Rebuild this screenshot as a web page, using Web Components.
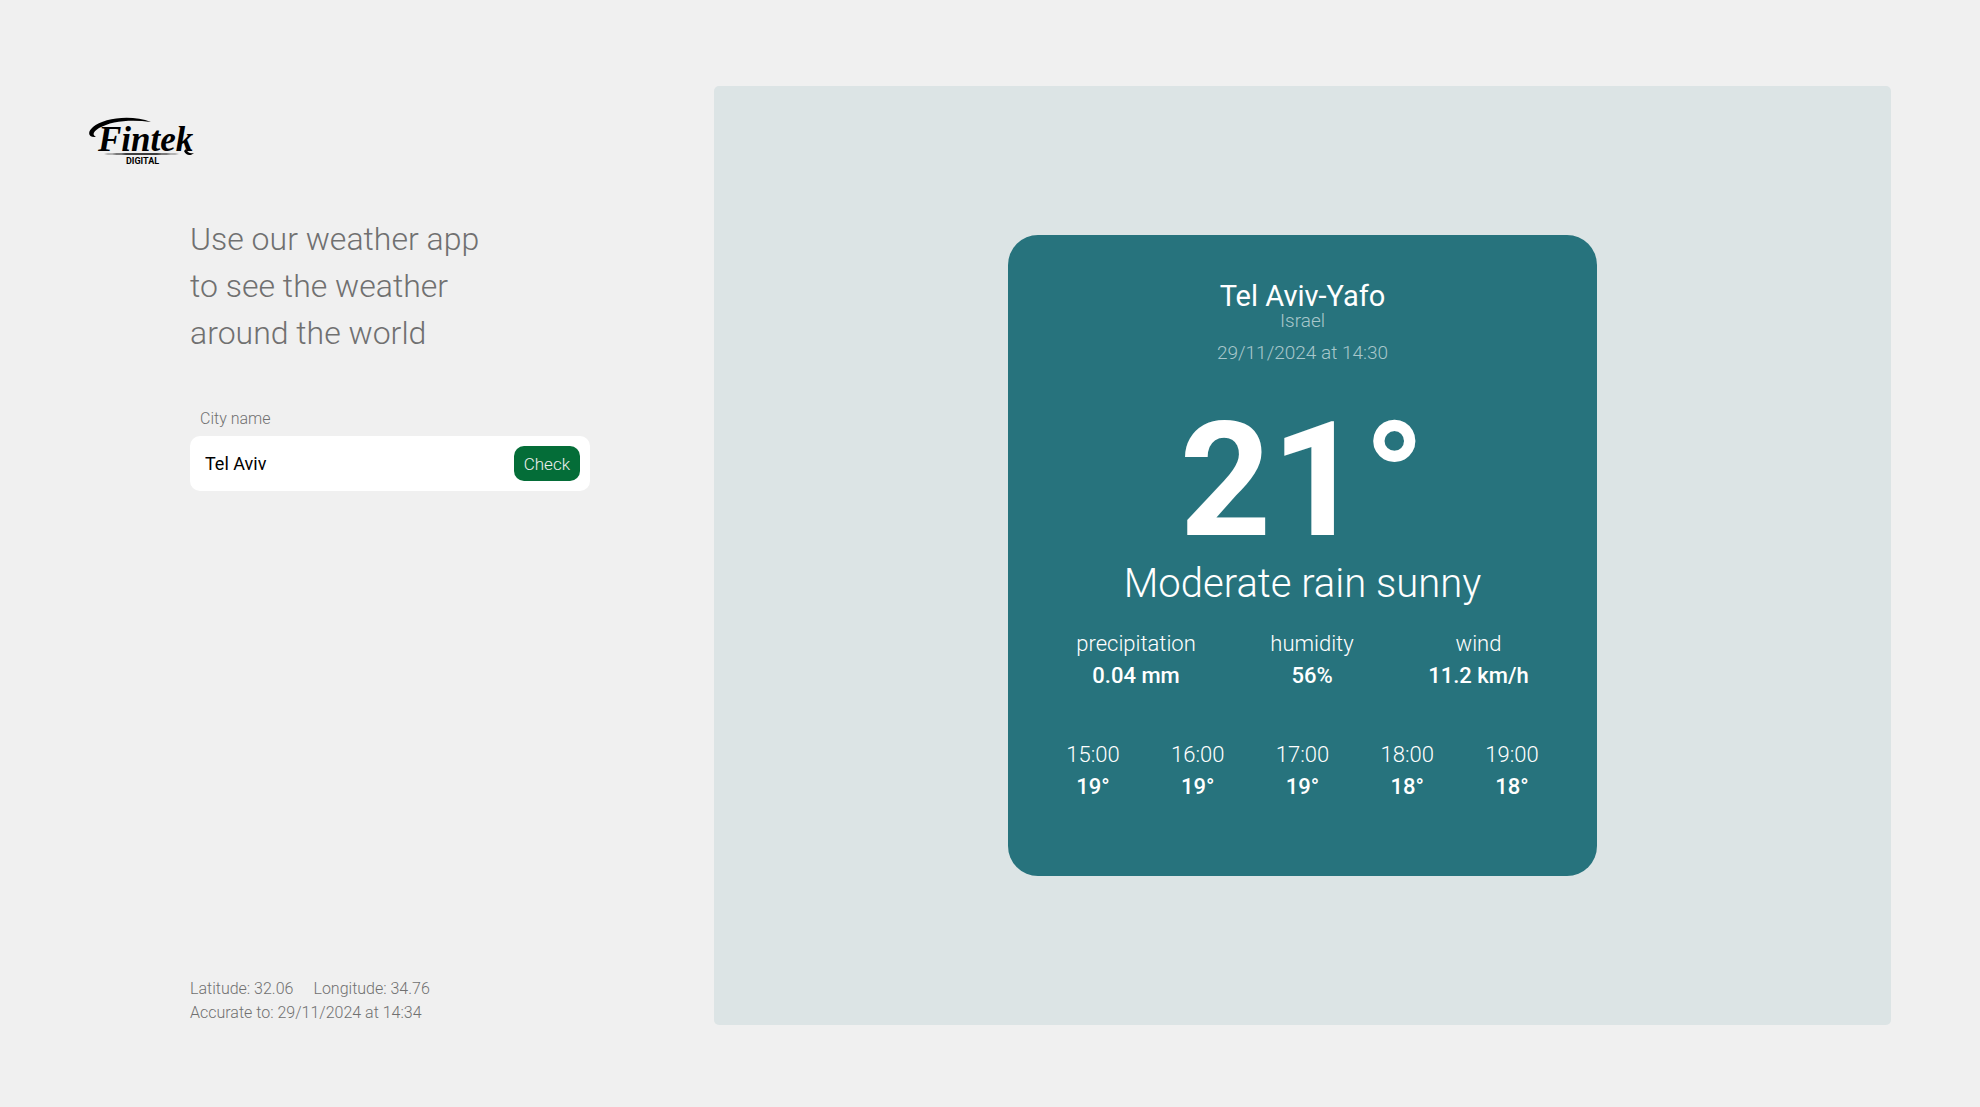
<!DOCTYPE html>
<html lang="en">
<head>
<meta charset="utf-8">
<meta name="viewport" content="width=device-width, initial-scale=1">
<title>Fintek Weather</title>
<style>
  html, body { height: 100%; }
  body {
    margin: 0;
    background: #f0f0f0;
    color: #707070;
    font-family: Roboto, "Liberation Sans", sans-serif;
    font-weight: 300;
  }
</style>
</head>
<body>
<weather-app></weather-app>

<script>
  const define = (name, html, setup) => {
    const template = document.createElement('template');
    template.innerHTML = html;
    customElements.define(name, class extends HTMLElement {
      constructor() {
        super();
        this.attachShadow({ mode: 'open' }).append(template.content.cloneNode(true));
      }
      connectedCallback() {
        if (setup) setup(this, this.shadowRoot);
      }
    });
  };

  define('brand-logo', `
    <style>
      :host { display: block; }
      svg { display: block; width: 108px; height: 54px; }
      .word { font: italic 700 35px "Liberation Serif", serif; }
      .sub { font: 700 9px Roboto, sans-serif; }
    </style>
    <svg viewBox="0 0 108 54" role="img" aria-label="Fintek Digital">
      <path d="M7 22C-1 23-2 17 4 12C14 3 42-1 62 7C42 4 22 6 10 13C4 17 3 20 7 22Z"/>
      <path d="M97 34C99 38 101 39 105 38C102 41 97 41 95 36Z"/>
      <path d="M15 39C35 38 70 38 90 39C70 40 35 40 15 39Z"/>
      <text class="word" x="9" y="36">Fintek</text>
      <text class="sub" x="37" y="49">DIGITAL</text>
    </svg>`);

  define('city-search', `
    <style>
      :host { display: block; }
      label { display: block; padding: 0 10px; font-size: 16px; line-height: 20px; }
      form { display: flex; align-items: center; gap: 10px; height: 55px; margin-top: 7px;
             padding: 0 10px 0 15px; box-sizing: border-box; background: #fff; border-radius: 10px; }
      input { flex: 1; min-width: 0; padding: 0; border: 0; outline: 0; background: none;
              font: 400 18px Roboto, sans-serif; color: #000; }
      button { height: 35px; padding: 0 10px; border: 0; border-radius: 10px;
               background: #046d38; color: #f0f0f0; font: 300 17px Roboto, sans-serif; }
    </style>
    <label for="city">City name</label>
    <form>
      <input id="city" type="text" value="Tel Aviv">
      <button type="button">Check</button>
    </form>`);

  define('location-info', `
    <style>
      :host { display: block; font-size: 16px; line-height: 24px; }
      div { display: flex; flex-wrap: wrap; column-gap: 20px; }
    </style>
    <div><slot name="latitude"></slot><slot name="longitude"></slot></div>
    <slot></slot>`);

  define('weather-stat', `
    <style>
      :host { display: flex; flex-direction: column; align-items: center;
              font-size: 22px; line-height: 32px; color: #fff; }
      strong { font-weight: 500; }
    </style>
    <span></span><strong><slot></slot></strong>`,
    (host, root) => { root.querySelector('span').textContent = host.getAttribute('label'); });

  define('weather-card', `
    <style>
      :host { display: flex; flex-direction: column; align-items: center; width: 50%;
              box-sizing: border-box; padding: 46px 0 73px; border-radius: 30px;
              background: #27737d; color: #fff; }
      h2 { margin: 0; font-size: 29px; line-height: 30px; font-weight: 400; }
      .faint { font-size: 19px; line-height: 20px; color: #a8c7cb; }
      .date { margin-top: 12px; }
      .temp { margin-top: 39px; font-size: 160px; line-height: 158px; font-weight: 700; }
      .sky { font-size: 40px; line-height: 48px; }
      .row { display: flex; justify-content: space-between; align-self: stretch; }
      .stats { margin-top: 20px; padding: 0 68px; }
      .hours { margin-top: 47px; padding: 0 58px; }
    </style>
    <h2><slot name="city"></slot></h2>
    <div class="faint"><slot name="country"></slot></div>
    <div class="faint date"><slot name="date"></slot></div>
    <div class="temp"><slot name="temp"></slot></div>
    <div class="sky"><slot name="sky"></slot></div>
    <div class="row stats"><slot name="stat"></slot></div>
    <div class="row hours"><slot name="hour"></slot></div>`);

  define('weather-app', `
    <style>
      :host { display: flex; min-height: 100vh; box-sizing: border-box; padding: 86px 89px 82px; }
      aside { flex: 0 0 625px; display: flex; flex-direction: column; box-sizing: border-box; padding-top: 29px; }
      .content { flex: 1; display: flex; flex-direction: column; width: 400px; margin-left: 101px; }
      h1 { max-width: 320px; margin: 47px 0 52px; font-size: 32px; line-height: 47px; font-weight: 300; }
      location-info { margin-top: auto; }
      main { flex: 1; display: flex; align-items: center; justify-content: center;
             background: #dce4e5; border-radius: 5px; }
    </style>
    <aside>
      <brand-logo></brand-logo>
      <div class="content">
        <h1>Use our weather app to see the weather around the world</h1>
        <city-search></city-search>
        <location-info>
          <span slot="latitude">Latitude: 32.06</span>
          <span slot="longitude">Longitude: 34.76</span>
          <span>Accurate to: 29/11/2024 at 14:34</span>
        </location-info>
      </div>
    </aside>
    <main>
      <weather-card>
        <span slot="city">Tel Aviv-Yafo</span>
        <span slot="country">Israel</span>
        <span slot="date">29/11/2024 at 14:30</span>
        <span slot="temp">21°</span>
        <span slot="sky">Moderate rain sunny</span>
        <weather-stat slot="stat" label="precipitation">0.04 mm</weather-stat>
        <weather-stat slot="stat" label="humidity">56%</weather-stat>
        <weather-stat slot="stat" label="wind">11.2 km/h</weather-stat>
        <weather-stat slot="hour" label="15:00">19°</weather-stat>
        <weather-stat slot="hour" label="16:00">19°</weather-stat>
        <weather-stat slot="hour" label="17:00">19°</weather-stat>
        <weather-stat slot="hour" label="18:00">18°</weather-stat>
        <weather-stat slot="hour" label="19:00">18°</weather-stat>
      </weather-card>
    </main>`);
</script>
</body>
</html>
